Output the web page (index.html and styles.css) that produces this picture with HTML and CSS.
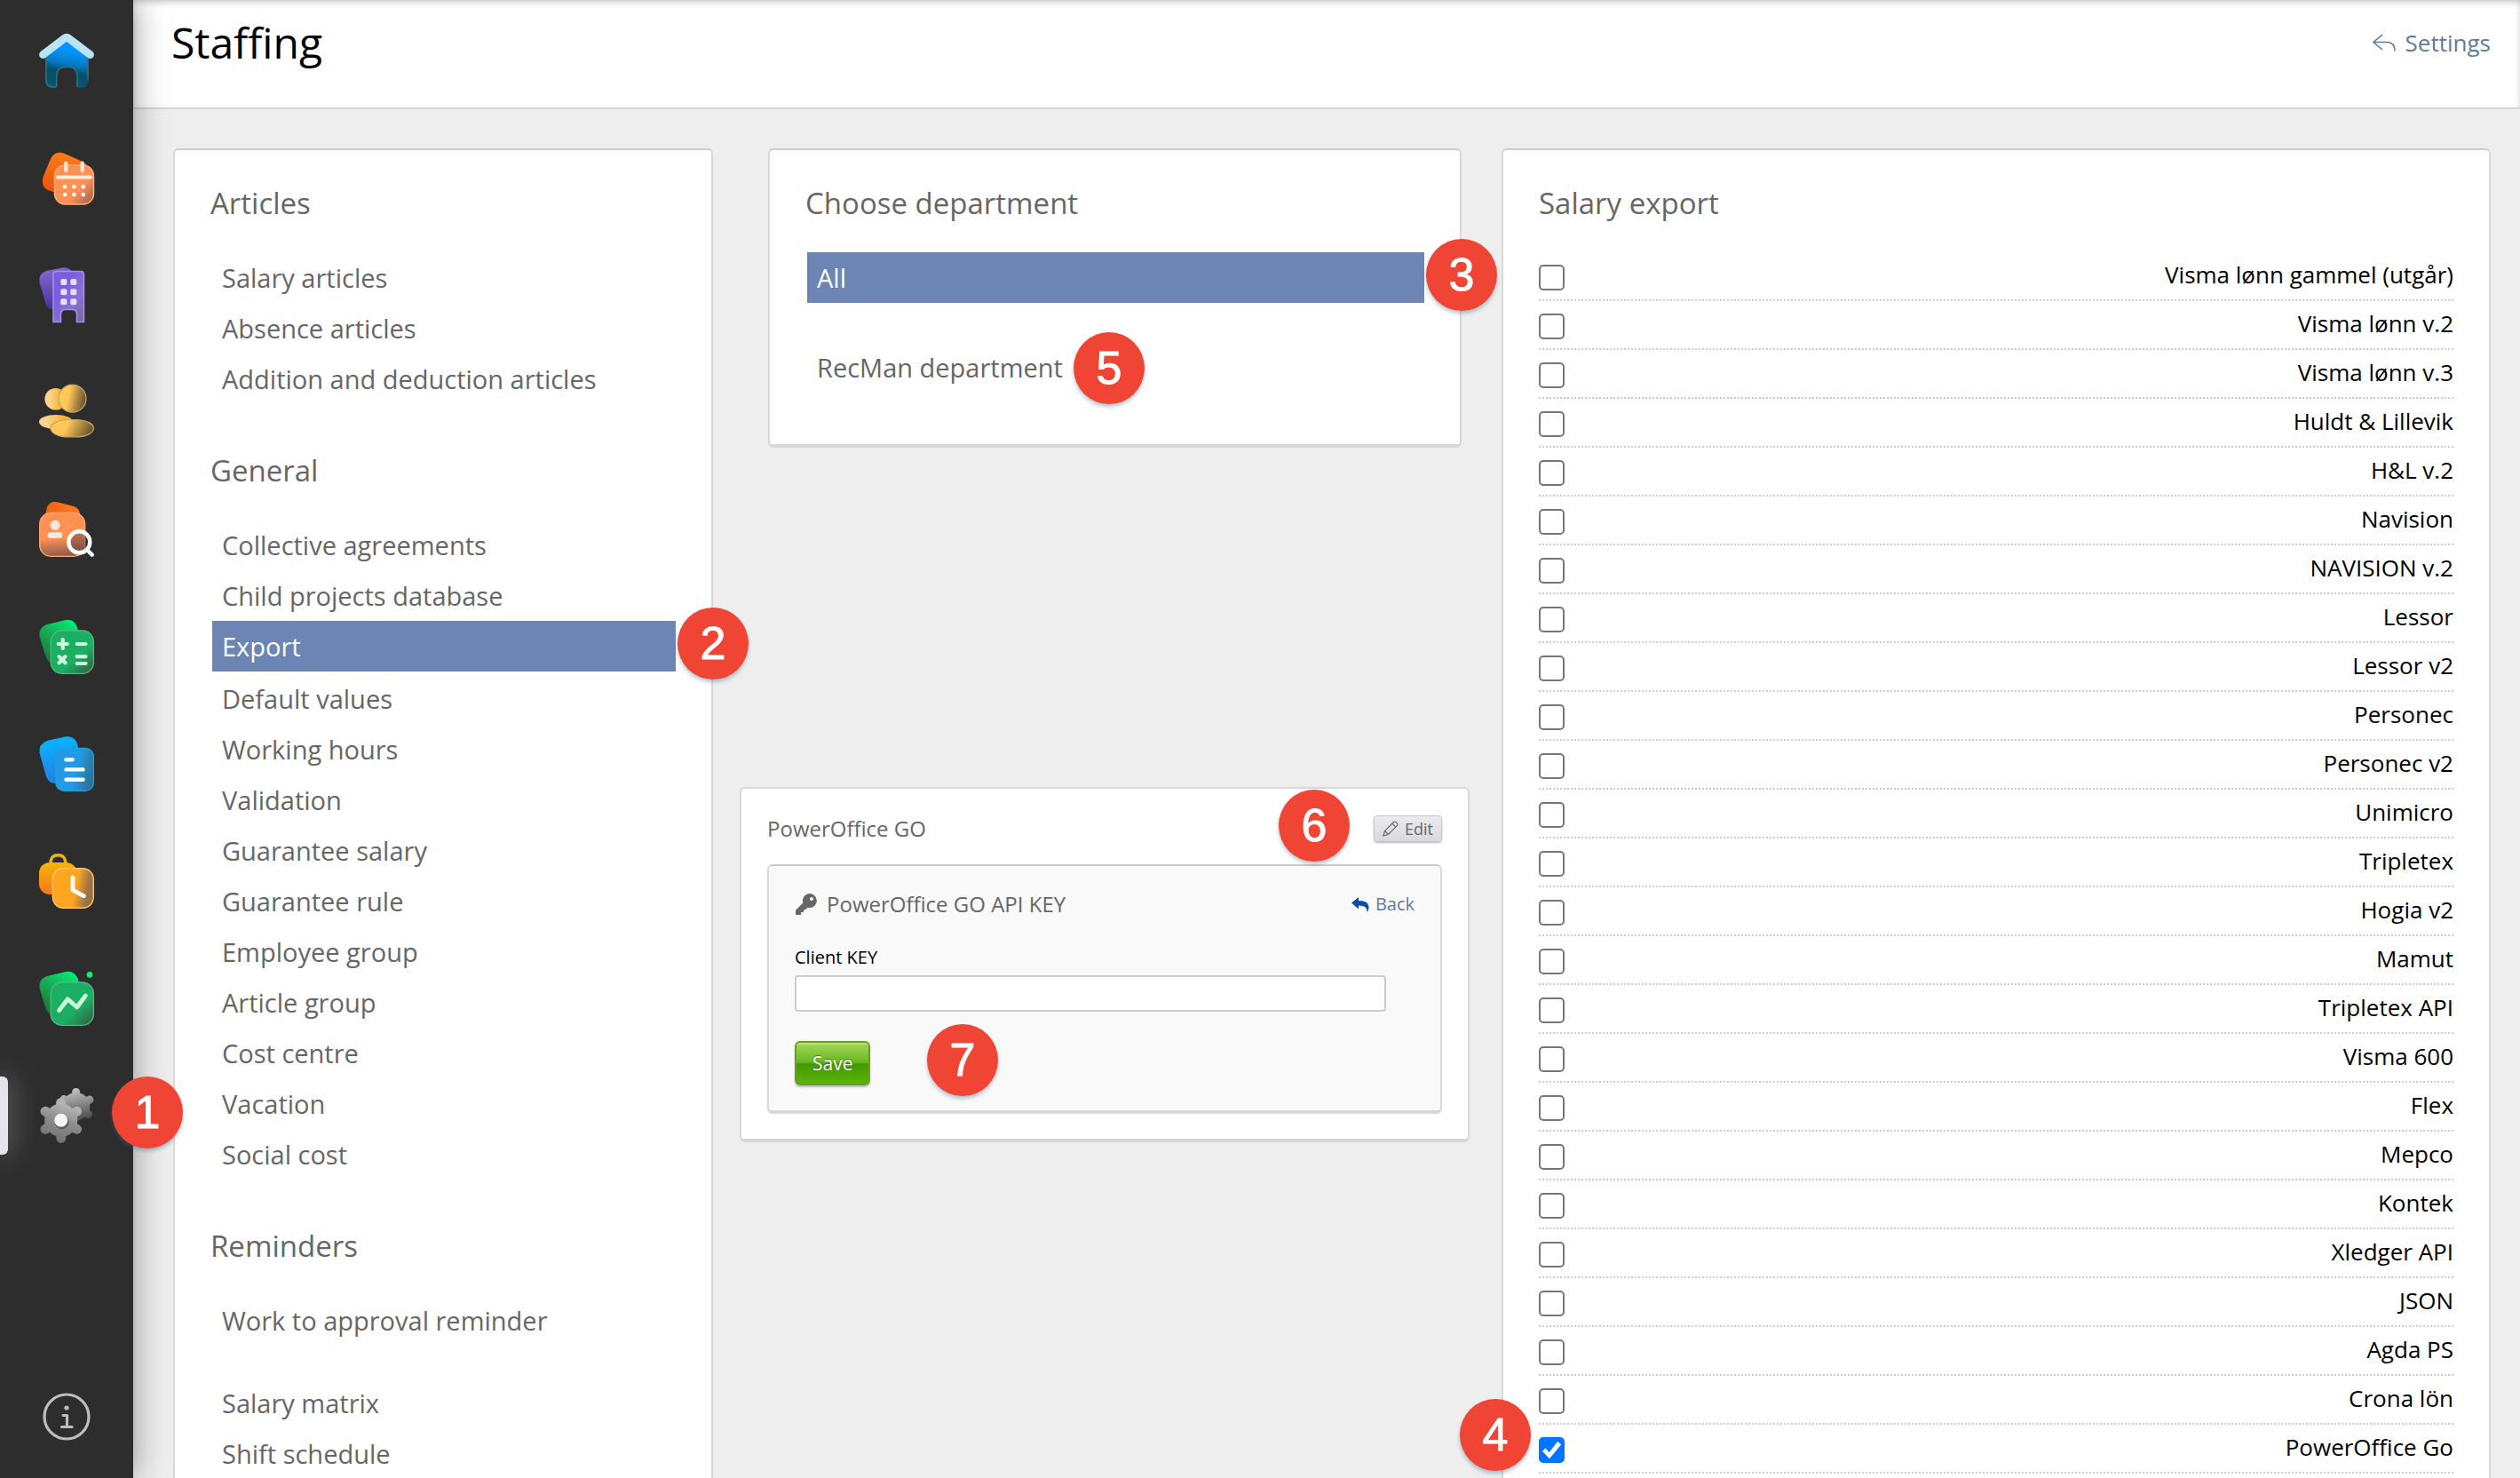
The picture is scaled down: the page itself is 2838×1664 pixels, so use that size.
FILE: index.html
```html
<!DOCTYPE html>
<html lang="en">
<head>
  <meta charset="UTF-8" />
  <meta name="viewport" content="width=device-width, initial-scale=1.0"/>
  <title>Staffing</title>
  <link rel="stylesheet" href="styles.css">
</head>
<body>
<div class="page">

  <!-- SIDEBAR -->
  <nav class="sidebar">
    <a href="#" class="nav-item" aria-label="Home">
      <svg class="nav-icon" viewBox="0 0 62 62">
        <defs>
          <linearGradient id="homeBody" x1="0.6" y1="0.1" x2="0.45" y2="1">
            <stop offset="0.1" stop-color="#0496ff"/><stop offset="0.42" stop-color="#067cc8"/><stop offset="0.62" stop-color="#055068"/><stop offset="1" stop-color="#07566c"/>
          </linearGradient>
        </defs>
        <path d="M7 24L31 9L55.500 24V53Q55.500 62 47 62H43V49Q43 38.500 33 38.500H30Q19.700 38.500 19.700 49V62H16Q7 62 7 53Z" fill="url(#homeBody)"/>
        <path d="M8 28V53Q8 61 16 61H19M19.700 61V49Q19.700 38.500 30 38.500H33Q43 38.500 43 49V61M55 28V53" fill="none" stroke="#2e7288" stroke-width="1.500"/>
        <path d="M4.500 24.500L28.500 6.200Q31 4.300 33.500 6.200L57.500 24.500" fill="none" stroke="#b9e4f5" stroke-width="8.800" stroke-linecap="round"/>
      </svg>
    </a>
    <a href="#" class="nav-item" aria-label="Calendar">
      <svg class="nav-icon" viewBox="0 0 62 62">
        <defs>
          <linearGradient id="calBack" x1="0.5" y1="0" x2="0.3" y2="1"><stop offset="0" stop-color="#ff7a1c"/><stop offset="1" stop-color="#e2540a"/></linearGradient>
          <linearGradient id="calFront" x1="0.2" y1="0.3" x2="1" y2="1"><stop offset="0.5" stop-color="#ff9155"/><stop offset="1" stop-color="#8d5e4d"/></linearGradient>
        </defs>
        <path d="M13 10Q18 0 29 4L49 13Q58 18 54 28L46 47Q41 56 31 52L10 45Q1 40 5 29Z" fill="url(#calBack)"/>
        <rect x="17.500" y="17" width="44" height="44" rx="12" fill="url(#calFront)" stroke="#ffab7d" stroke-width="1.500"/>
        <path d="M30.300 14.500V23M48.700 14.500V23M21 30.500H58" stroke="#fbe9dc" stroke-width="4.200" stroke-linecap="round"/>
        <g fill="#fff"><circle cx="29" cy="41.300" r="2.300"/><circle cx="39.300" cy="41.300" r="2.300"/><circle cx="49.700" cy="41.300" r="2.300"/><circle cx="29" cy="50" r="2.300"/><circle cx="39.300" cy="50" r="2.300"/><circle cx="49.700" cy="50" r="2.300"/></g>
      </svg>
    </a>
    <a href="#" class="nav-item" aria-label="Companies">
      <svg class="nav-icon" viewBox="0 0 62 62">
        <defs>
          <linearGradient id="bldBack" x1="0.3" y1="0" x2="0.5" y2="1"><stop offset="0" stop-color="#8468d0"/><stop offset="1" stop-color="#45309b"/></linearGradient>
          <linearGradient id="bldFront" x1="0.2" y1="0.1" x2="1" y2="1"><stop offset="0.2" stop-color="#7a5ce0"/><stop offset="0.6" stop-color="#8872d2"/><stop offset="1" stop-color="#736b8c"/></linearGradient>
        </defs>
        <path d="M8 4L26 .5Q35 -1 38 7L40 14V42L17 47Q10 49 7 39L.5 17Q-1 7 8 4Z" fill="url(#bldBack)"/>
        <path d="M16 61.500V8Q16 4.500 19.500 4.500H47Q50.500 4.500 50.500 8V61.500H42.500V53Q42.500 47.500 37 47.500H30Q24.500 47.500 24.500 53V61.500Z" fill="url(#bldFront)" stroke="#a492e0" stroke-width="1.500"/>
        <g fill="#e8dcff"><rect x="24.300" y="13" width="7" height="7" rx="2"/><rect x="35.300" y="13" width="7" height="7" rx="2"/><rect x="24.300" y="24.200" width="7" height="7" rx="2"/><rect x="35.300" y="24.200" width="7" height="7" rx="2"/><rect x="24.300" y="35.200" width="7" height="7" rx="2"/><rect x="35.300" y="35.200" width="7" height="7" rx="2"/></g>
      </svg>
    </a>
    <a href="#" class="nav-item" aria-label="Candidates">
      <svg class="nav-icon" viewBox="0 0 62 62">
        <defs>
          <linearGradient id="pplBack"><stop offset="0.2" stop-color="#fad48d"/><stop offset="0.8" stop-color="#fbb023"/></linearGradient>
          <linearGradient id="pplFront" x1="0" y1="0.4" x2="1" y2="0.6"><stop offset="0.35" stop-color="#ffc658"/><stop offset="1" stop-color="#5d4c2d"/></linearGradient>
        </defs>
        <circle cx="18.700" cy="16.300" r="12.300" fill="url(#pplBack)"/>
        <circle cx="37.500" cy="15.700" r="15.500" fill="url(#pplFront)" stroke="#c2a468" stroke-width="1.200"/>
        <ellipse cx="19" cy="42" rx="19" ry="8" fill="url(#pplBack)"/>
        <rect x="13" y="39.500" width="48.500" height="19.500" rx="20" ry="9.750" fill="url(#pplFront)" stroke="#c2a468" stroke-width="1.200"/>
      </svg>
    </a>
    <a href="#" class="nav-item" aria-label="Recruitment">
      <svg class="nav-icon" viewBox="0 0 62 62">
        <defs>
          <linearGradient id="recFront" x1="0.5" y1="0" x2="0.6" y2="1"><stop offset="0.55" stop-color="#ff9155"/><stop offset="1" stop-color="#8a5a48"/></linearGradient>
          <linearGradient id="recBack"><stop offset="0" stop-color="#ee620f"/><stop offset="1" stop-color="#ff7d22"/></linearGradient>
        </defs>
        <path d="M8 10Q10 -2 21 .5L39 5Q47 8 46 16V20H6Z" fill="url(#recBack)"/>
        <rect x=".7" y="12.500" width="51" height="48.800" rx="12.500" fill="url(#recFront)" stroke="#ffa87a" stroke-width="1.300"/>
        <circle cx="18" cy="26.300" r="5.500" fill="#fde6dc"/>
        <rect x="9.700" y="34" width="16.600" height="7" rx="3.500" fill="#fde6dc"/>
        <circle cx="45.300" cy="45.300" r="12" fill="#3a2636" fill-opacity=".35" stroke="#fff" stroke-width="4.500"/>
        <path d="M54.500 54.500L59.700 59.700" stroke="#fff" stroke-width="4.500" stroke-linecap="round"/>
      </svg>
    </a>
    <a href="#" class="nav-item" aria-label="Payroll">
      <svg class="nav-icon" viewBox="0 0 62 62">
        <defs>
          <linearGradient id="greenBack" x1="0.8" y1="0" x2="0.2" y2="0.9"><stop offset="0" stop-color="#04f278"/><stop offset="0.5" stop-color="#14b058"/><stop offset="1" stop-color="#1d7a35"/></linearGradient>
          <linearGradient id="greenFront" x1="0.3" y1="0.2" x2="1" y2="1"><stop offset="0.5" stop-color="#1aaf63"/><stop offset="1" stop-color="#35563f"/></linearGradient>
        </defs>
        <path d="M9 6L29 1.300Q39 -1 43 9L50 42L18 49Q10 51 7 41L.6 20Q-1 9 9 6Z" fill="url(#greenBack)"/>
        <rect x="13.200" y="13" width="48.200" height="48.300" rx="12.500" fill="url(#greenFront)" stroke="#58b581" stroke-width="1.300"/>
        <path d="M26.700 23V33M21.700 28H31.700M42.700 28H52.500M42.700 42.200H52.500M42.700 50H52.500M22.500 42.200L29.500 49.200M29.500 42.200L22.500 49.200" stroke="#ccf8df" stroke-width="4.200" stroke-linecap="round"/>
      </svg>
    </a>
    <a href="#" class="nav-item" aria-label="Documents">
      <svg class="nav-icon" viewBox="0 0 62 62">
        <defs>
          <linearGradient id="docBack" x1="0.4" y1="0" x2="0.6" y2="1"><stop offset="0" stop-color="#08b6ff"/><stop offset="0.8" stop-color="#1f85e6"/></linearGradient>
          <linearGradient id="docFront" x1="0" y1="0.3" x2="1" y2="0.6"><stop offset="0.55" stop-color="#229ae6"/><stop offset="1" stop-color="#316f94"/></linearGradient>
        </defs>
        <path d="M9 5L29 .5Q39 -1.500 43 8L51 46L20 53Q11 54 8 45L.6 19Q-1 9 9 5Z" fill="url(#docBack)"/>
        <rect x="18.800" y="13.500" width="42.600" height="47.800" rx="9" fill="url(#docFront)" stroke="#1ba2da" stroke-width="1.300"/>
        <path d="M30.500 26.300H37.500M30.500 37.400H49.500M30.500 48.700H49.500" stroke="#fff" stroke-width="4.400" stroke-linecap="round"/>
      </svg>
    </a>
    <a href="#" class="nav-item" aria-label="Time tracking">
      <svg class="nav-icon" viewBox="0 0 62 62">
        <defs>
          <linearGradient id="bagBack" x1="0.5" y1="0" x2="0.5" y2="1"><stop offset="0" stop-color="#f2b60b"/><stop offset="1" stop-color="#f7761c"/></linearGradient>
          <linearGradient id="bagFront" x1="0" y1="0.4" x2="1" y2="0.6"><stop offset="0.55" stop-color="#ffa51f"/><stop offset="0.85" stop-color="#9c7446"/><stop offset="1" stop-color="#96713f"/></linearGradient>
        </defs>
        <path d="M13 12Q12.500 1.700 21.400 1.700Q30 1.700 29.800 12" fill="none" stroke="#efb414" stroke-width="3.400"/>
        <rect y="10" width="42.500" height="36" rx="12" fill="url(#bagBack)"/>
        <rect x="15.300" y="16.800" width="46" height="44.500" rx="12" fill="url(#bagFront)" stroke="#ffc36c" stroke-width="1.400"/>
        <path d="M38 27V41L50.500 47.800" fill="none" stroke="#fff" stroke-width="4.800" stroke-linecap="round" stroke-linejoin="round"/>
      </svg>
    </a>
    <a href="#" class="nav-item" aria-label="Reports">
      <svg class="nav-icon" viewBox="0 0 62 62">
        <path d="M9 6L29 1.300Q39 -1 44 9L50 42L18 49Q10 51 7 41L.6 20Q-1 9 9 6Z" fill="url(#greenBack)"/>
        <rect x="13.200" y="13" width="48.200" height="48.300" rx="12.500" fill="url(#greenFront)" stroke="#58b581" stroke-width="1.300"/>
        <path d="M22.600 44.500L32.300 31.800L42.700 41L52.300 28" fill="none" stroke="#ccf8df" stroke-width="4.800" stroke-linecap="round" stroke-linejoin="round"/>
        <circle cx="57" cy="4.300" r="3.400" fill="#12ec79"/>
      </svg>
    </a>
    <a href="#" class="nav-item selected" aria-label="Settings">
      <svg class="nav-icon" viewBox="0 0 62 62">
        <defs>
          <linearGradient id="gearBack" gradientUnits="userSpaceOnUse" x1="40" y1="0" x2="48" y2="38"><stop offset="0" stop-color="#c4c4c4"/><stop offset="0.9" stop-color="#515151"/></linearGradient>
          <linearGradient id="gearFront" gradientUnits="userSpaceOnUse" x1="34" y1="16" x2="20" y2="60"><stop offset="0.1" stop-color="#b2b2b2"/><stop offset="0.5" stop-color="#8d8d8d"/><stop offset="1" stop-color="#717372"/></linearGradient>
        </defs>
        <g stroke="url(#gearBack)" stroke-width="9" stroke-linecap="round" fill="url(#gearBack)">
          <circle cx="41.700" cy="20.500" r="11"/>
          <path d="M41.600 4.500L41.800 33M28 12.500L55.500 29.500M28 29L57 13"/>
        </g>
        <g stroke="url(#gearFront)" stroke-width="11" stroke-linecap="round" stroke-linejoin="round" fill="url(#gearFront)">
          <circle cx="24.700" cy="36.300" r="13"/>
          <path d="M24.600 16.500L24.800 56.300M7 26.300L42.500 46.300M7 46.300L42.500 26.300"/>
        </g>
        <circle cx="25.800" cy="38.300" r="8" fill="#333" fill-opacity=".5"/>
        <circle cx="24.700" cy="36.300" r="7.500" fill="#f5f5f5"/>
      </svg>
      <span class="badge">1</span>
    </a>
    <a href="#" class="nav-info" aria-label="Info">
      <svg class="info-icon" viewBox="0 0 54 54">
        <g fill="none" stroke="#bdbdbd" stroke-width="3.200" stroke-linecap="round" stroke-linejoin="round">
          <circle cx="27" cy="27" r="25"/>
          <path d="M23 25.500H27.500V38.500M21.500 38.500H33"/>
        </g>
        <circle cx="27" cy="17" r="2.600" fill="#bdbdbd"/>
      </svg>
    </a>
  </nav>

  <!-- MAIN -->
  <main class="main">
    <header class="topbar">
      <h1 class="page-title">Staffing</h1>
      <a href="#" class="settings-link">
        <svg class="settings-arrow" viewBox="0 0 26 20"><path d="M11 1L1 9.500L11 18M1 9.500H17Q25 10 25 19.500" fill="none" stroke="#5f7a9b" stroke-width="1.600"/></svg>
        Settings
      </a>
    </header>

    <div class="columns">

      <!-- Settings menu -->
      <section class="card">
        <h2 class="card-title">Articles</h2>
        <ul class="menu">
          <li><a href="#">Salary articles</a></li>
          <li><a href="#">Absence articles</a></li>
          <li><a href="#">Addition and deduction articles</a></li>
        </ul>
        <h2 class="card-title">General</h2>
        <ul class="menu">
          <li><a href="#">Collective agreements</a></li>
          <li><a href="#">Child projects database</a></li>
          <li class="active"><a href="#">Export</a><span class="badge">2</span></li>
          <li><a href="#">Default values</a></li>
          <li><a href="#">Working hours</a></li>
          <li><a href="#">Validation</a></li>
          <li><a href="#">Guarantee salary</a></li>
          <li><a href="#">Guarantee rule</a></li>
          <li><a href="#">Employee group</a></li>
          <li><a href="#">Article group</a></li>
          <li><a href="#">Cost centre</a></li>
          <li><a href="#">Vacation</a></li>
          <li><a href="#">Social cost</a></li>
        </ul>
        <h2 class="card-title">Reminders</h2>
        <ul class="menu">
          <li><a href="#">Work to approval reminder</a></li>
        </ul>
        <ul class="menu menu-extra">
          <li><a href="#">Salary matrix</a></li>
          <li><a href="#">Shift schedule</a></li>
        </ul>
      </section>

      <!-- Departments and integration key -->
      <div class="middle">
        <section class="card departments">
          <h2 class="card-title">Choose department</h2>
          <ul class="menu department-list">
            <li class="active"><a href="#">All</a><span class="badge">3</span></li>
            <li><a href="#" class="with-badge">RecMan department<span class="badge badge-near">5</span></a></li>
          </ul>
        </section>

        <section class="power-card">
          <div class="power-head">
            <h2 class="power-title">PowerOffice GO</h2>
            <div class="edit-wrap">
              <span class="badge badge-edit">6</span>
              <button type="button" class="edit-btn">
                <svg class="pencil" viewBox="0 0 18 18"><path d="M1 17L2.500 11.500L12.500 1.500Q14 .3 15.500 1.800L16.300 2.600Q17.700 4 16.500 5.500L6.500 15.500ZM10.800 3.200L14.800 7.200M2.500 11.500L6.500 15.500" fill="none" stroke="#666" stroke-width="1.100"/></svg>
                Edit
              </button>
            </div>
          </div>

          <form class="key-form">
            <div class="key-head">
              <h3 class="key-title">
                <svg class="key-icon" viewBox="0 0 24 24"><path fill="#666" fill-rule="evenodd" d="M16 0A8 8 0 0 0 8.400 10.500L.4 18.500Q0 19 0 19.500V23Q0 24 1 24H5.500Q6.200 24 6.200 23V21H8.500Q9.300 21 9.300 20V18H11.500L13.600 15.700A8 8 0 1 0 16 0ZM18 4A2 2 0 1 1 18 8A2 2 0 1 1 18 4Z"/></svg>
                PowerOffice GO API KEY
              </h3>
              <a href="#" class="back-link">
                <svg class="back-arrow" viewBox="0 0 20 17"><path fill="#0650ac" d="M0 6.500L8 0V4Q20 4 19.500 12Q19.300 15 17.500 17Q18.500 9.500 8 9.500V13.500Z"/></svg>
                Back
              </a>
            </div>
            <label class="key-label" for="client-key">Client KEY</label>
            <input class="key-input" id="client-key" type="text">
            <div class="save-row">
              <button type="button" class="save-btn">Save</button>
              <span class="badge badge-save">7</span>
            </div>
          </form>
        </section>
      </div>

      <!-- Salary systems -->
      <section class="card export-card">
        <h2 class="card-title">Salary export</h2>
        <ul class="options">
          <li><label class="option"><input type="checkbox">Visma lønn gammel (utgår)</label></li>
          <li><label class="option"><input type="checkbox">Visma lønn v.2</label></li>
          <li><label class="option"><input type="checkbox">Visma lønn v.3</label></li>
          <li><label class="option"><input type="checkbox">Huldt &amp; Lillevik</label></li>
          <li><label class="option"><input type="checkbox">H&amp;L v.2</label></li>
          <li><label class="option"><input type="checkbox">Navision</label></li>
          <li><label class="option"><input type="checkbox">NAVISION v.2</label></li>
          <li><label class="option"><input type="checkbox">Lessor</label></li>
          <li><label class="option"><input type="checkbox">Lessor v2</label></li>
          <li><label class="option"><input type="checkbox">Personec</label></li>
          <li><label class="option"><input type="checkbox">Personec v2</label></li>
          <li><label class="option"><input type="checkbox">Unimicro</label></li>
          <li><label class="option"><input type="checkbox">Tripletex</label></li>
          <li><label class="option"><input type="checkbox">Hogia v2</label></li>
          <li><label class="option"><input type="checkbox">Mamut</label></li>
          <li><label class="option"><input type="checkbox">Tripletex API</label></li>
          <li><label class="option"><input type="checkbox">Visma 600</label></li>
          <li><label class="option"><input type="checkbox">Flex</label></li>
          <li><label class="option"><input type="checkbox">Mepco</label></li>
          <li><label class="option"><input type="checkbox">Kontek</label></li>
          <li><label class="option"><input type="checkbox">Xledger API</label></li>
          <li><label class="option"><input type="checkbox">JSON</label></li>
          <li><label class="option"><input type="checkbox">Agda PS</label></li>
          <li><label class="option"><input type="checkbox">Crona lön</label></li>
          <li><label class="option"><input type="checkbox" checked>PowerOffice Go</label><span class="badge badge-check">4</span></li>
        </ul>
      </section>

    </div>
  </main>
</div>
</body>
</html>
```
FILE: styles.css
```css
* {
  box-sizing: border-box;
}

html, body {
  margin: 0;
  padding: 0;
  height: 100%;
}

body {
  background: #eee;
  color: #666;
  font-family: "Open Sans", sans-serif;
  font-size: 29px;
}

h1, h2, h3 {
  margin: 0;
  font-weight: 400;
}

ul {
  margin: 0;
  padding: 0;
  list-style: none;
}

a {
  color: inherit;
  text-decoration: none;
}

svg {
  display: block;
  overflow: visible;
}

.page {
  display: flex;
  height: 100vh;
  overflow: hidden;
}

/* SIDEBAR */
.sidebar {
  position: relative;
  z-index: 2;
  display: flex;
  flex-direction: column;
  flex: none;
  width: 150px;
  padding-top: 2px;
  background: #2d2d2d;
  box-shadow: 0 0 36px rgba(0, 0, 0, 0.4);
}

.nav-item {
  position: relative;
  display: flex;
  justify-content: center;
  align-items: center;
  flex: none;
  height: 132px;
}

.nav-icon {
  width: 62px;
  height: 62px;
}

.selected::before {
  content: "";
  position: absolute;
  top: 22px;
  left: 0;
  width: 9px;
  height: 88px;
  background: #e5e4ea;
  border-radius: 0 6px 6px 0;
  box-shadow: 0 0 30px rgba(255, 255, 255, 0.5);
}

.nav-info {
  display: flex;
  justify-content: center;
  margin-top: auto;
  padding-bottom: 42px;
}

.info-icon {
  width: 54px;
  height: 54px;
}

/* STEP BADGES */
.badge {
  position: absolute;
  top: 50%;
  left: calc(100% + 2px);
  z-index: 3;
  width: 80px;
  height: 81px;
  margin-top: -44px;
  border-radius: 50%;
  background: #f04535;
  box-shadow: 0 3px 4px rgba(60, 110, 140, 0.4);
  color: #fff;
  font-family: "Liberation Sans", Arial, sans-serif;
  font-size: 52px;
  line-height: 80px;
  text-align: center;
  -webkit-text-stroke: 1px #fff;
}

.nav-item .badge {
  left: auto;
  right: -56px;
}

.menu .badge-near {
  left: calc(100% + 12px);
  margin-top: -40px;
}

.badge-edit {
  left: auto;
  right: calc(100% + 27px);
}

.badge-save {
  left: 149px;
}

.badge-check {
  left: auto;
  right: calc(100% + 9px);
  margin-top: -56px;
}

/* HEADER */
.main {
  flex: 1;
  min-width: 0;
}

.topbar {
  display: flex;
  justify-content: space-between;
  align-items: center;
  height: 123px;
  padding: 0 33px 25px 43px;
  background: #fff;
  border-bottom: 2px solid #d5d5d5;
  box-shadow: inset 0 3px 8px -2px rgba(0, 0, 0, 0.3);
}

.page-title {
  color: #000;
  font-size: 48px;
  line-height: 64px;
}

.settings-link {
  display: flex;
  align-items: center;
  gap: 11px;
  color: #5f7a9b;
  font-size: 26px;
}

.settings-arrow {
  width: 26px;
  height: 20px;
}

/* COLUMNS */
.columns {
  display: grid;
  grid-template-columns: 608fr 822fr 1120fr;
  column-gap: 30px;
  padding: 44px 33px 44px 45px;
}

.card {
  padding: 40px 40px 58px;
  background: #fff;
  border: 2px solid #d8d8d8;
  border-top-color: #ccc;
  border-bottom-width: 4px;
  border-radius: 6px;
}

.card-title {
  margin-bottom: 35px;
  font-size: 33px;
  line-height: 40px;
}

.menu + .card-title {
  margin-top: 55px;
}

.menu {
  margin-left: 2px;
}

.menu li {
  position: relative;
}

.menu a {
  display: block;
  padding-left: 11px;
  line-height: 57px;
}

.menu .active {
  margin-bottom: 2px;
  background: #6d85b4;
  color: #fff;
}

.menu-extra {
  margin-top: 36px;
}

.department-list {
  display: flex;
  flex-direction: column;
  gap: 42px;
}

.menu .with-badge {
  position: relative;
  display: inline-block;
}

.middle {
  min-width: 0;
}

.departments {
  margin: 0 9px 382px 32px;
}

.export-card {
  margin-left: 6px;
}

/* POWEROFFICE CARD */
.power-card {
  padding: 25px 29px 28px;
  background: #fff;
  border: 2px solid #d8d8d8;
  border-bottom-width: 4px;
  border-radius: 6px;
}

.power-head {
  display: flex;
  justify-content: space-between;
  align-items: center;
  height: 40px;
  margin-bottom: 20px;
}

.power-title,
.key-title {
  font-size: 24px;
  line-height: 30px;
}

.edit-wrap {
  position: relative;
}

.edit-btn {
  display: flex;
  align-items: center;
  gap: 7px;
  height: 30px;
  padding: 0 9px;
  background: linear-gradient(#ececef, #d8d9dd);
  border: 1px solid #c8c8cc;
  border-radius: 4px;
  box-shadow: 0 1px 2px rgba(0, 0, 0, 0.3);
  color: #666;
  font-family: inherit;
  font-size: 18px;
  line-height: 26px;
}

.pencil {
  width: 18px;
  height: 18px;
}

.key-form {
  padding: 28px 29px;
  background: #f9f9f9;
  border: 2px solid #d8d8d8;
  border-top-color: #ccc;
  border-bottom-width: 4px;
  border-radius: 6px;
}

.key-head {
  display: flex;
  justify-content: space-between;
  align-items: center;
  margin-bottom: 32px;
}

.key-title {
  display: flex;
  align-items: center;
  gap: 10px;
}

.key-icon {
  width: 26px;
  height: 24px;
}

.back-link {
  display: flex;
  align-items: center;
  gap: 7px;
  color: #5f7a9b;
  font-size: 20px;
  line-height: 26px;
}

.back-arrow {
  width: 20px;
  height: 17px;
}

.key-label {
  display: block;
  margin-bottom: 7px;
  color: #000;
  font-size: 20px;
  line-height: 26px;
}

.key-input {
  display: block;
  width: calc(100% - 32px);
  height: 41px;
  padding: 0 8px;
  background: #fff;
  border: 2px solid #ccc;
  border-radius: 4px;
  font-family: inherit;
  font-size: 20px;
}

.save-row {
  position: relative;
  margin-top: 33px;
}

.save-btn {
  display: block;
  height: 50px;
  padding: 0 18px;
  background: linear-gradient(#a5d65a, #66b81f 48%, #449900 52%, #5cb30a);
  border: 2px solid #6b9f1c;
  border-radius: 6px;
  box-shadow: 0 2px 2px rgba(0, 0, 0, 0.25), inset 0 2px 0 rgba(255, 255, 255, 0.25);
  color: #fff;
  font-family: inherit;
  font-size: 21px;
  text-shadow: 0 -1px 1px rgba(0, 0, 0, 0.4);
}

/* SALARY EXPORT */
.options li {
  position: relative;
  border-bottom: 2px dotted #ccc;
}

.option {
  display: flex;
  justify-content: space-between;
  align-items: center;
  height: 53px;
  padding-bottom: 3px;
  color: #000;
  font-size: 26px;
  line-height: 44px;
}

.option input {
  position: relative;
  flex: none;
  width: 29px;
  height: 29px;
  margin: 7px 0 0;
  appearance: none;
  background: #fff;
  border: 2px solid #767676;
  border-radius: 5px;
}

.option input:checked {
  background: #0075ff;
  border-color: #0075ff;
}

.option input:checked::after {
  content: "";
  position: absolute;
  inset: 0;
  background: #fff;
  clip-path: polygon(8% 55%, 22% 42%, 39% 60%, 77% 11%, 93% 25%, 40% 89%);
}
```
